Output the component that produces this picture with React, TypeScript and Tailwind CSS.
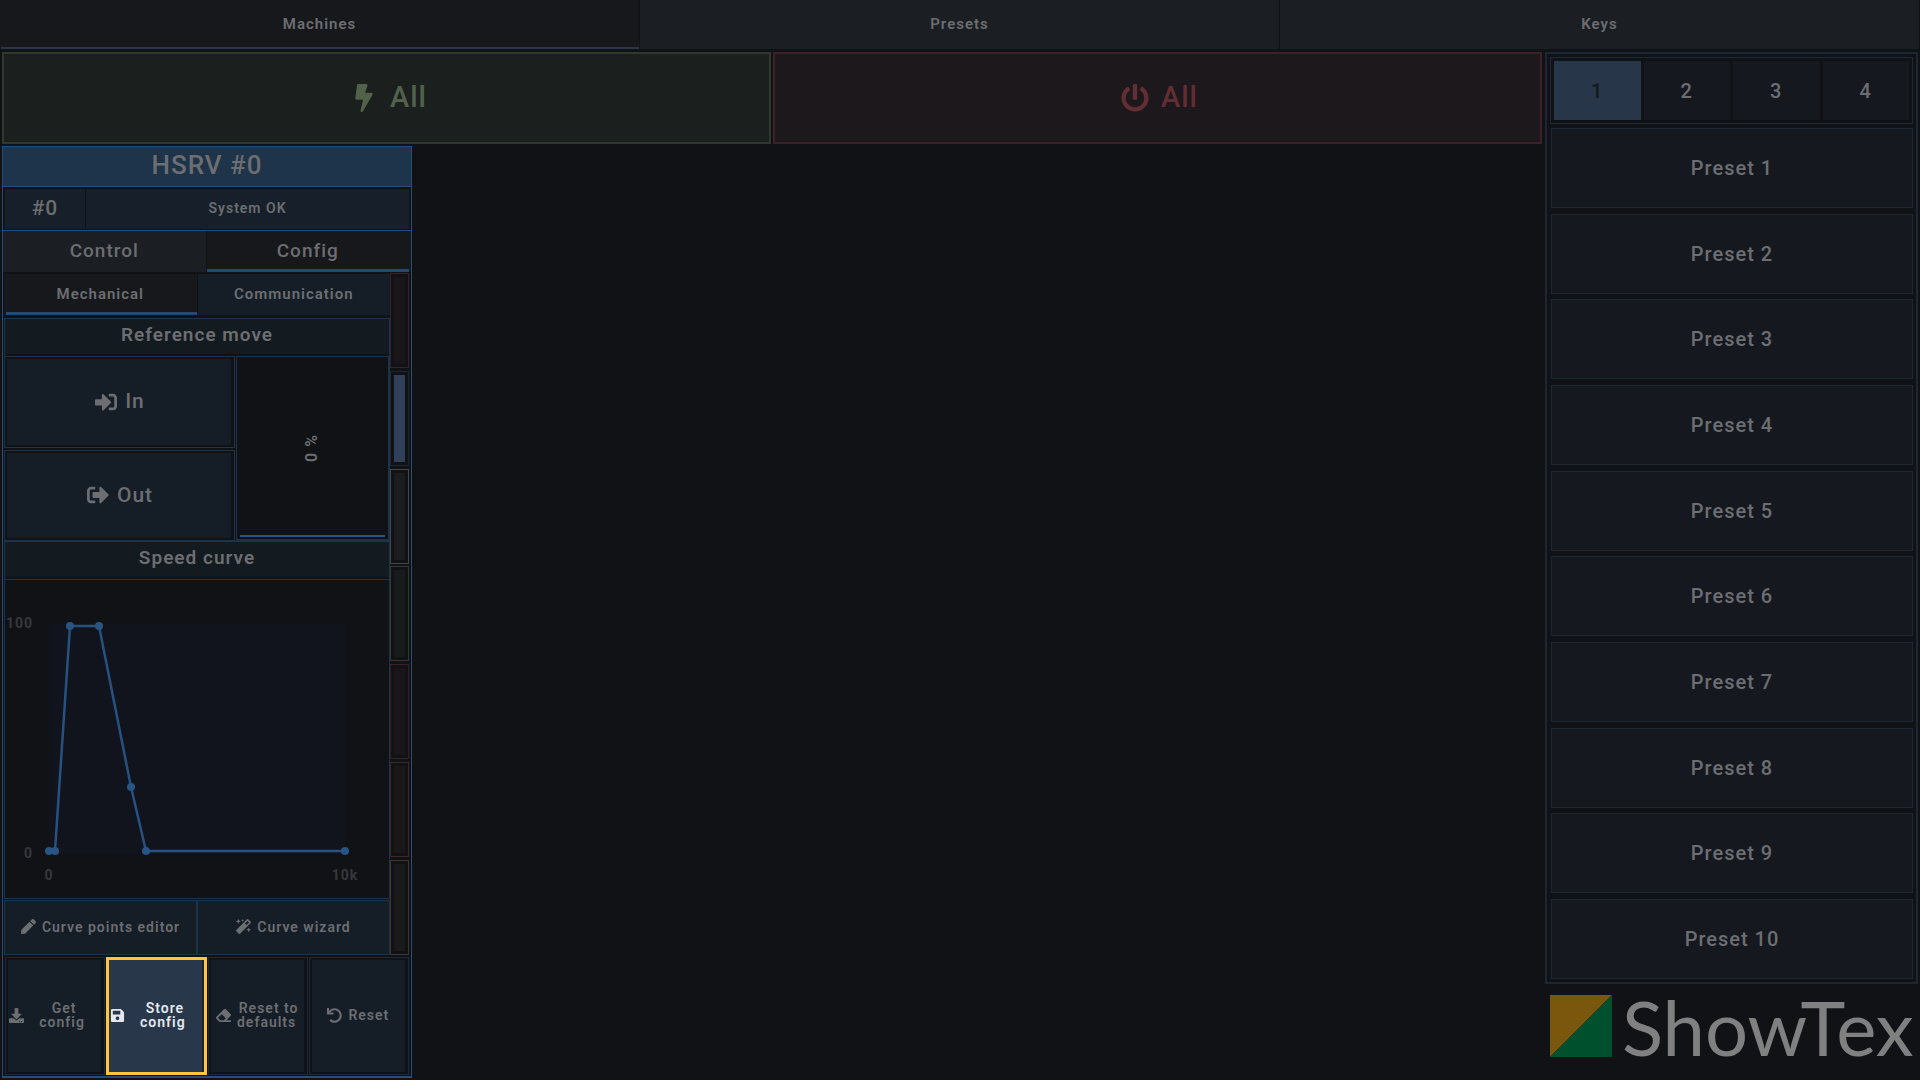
import type { ReactNode } from 'react'
import clsx from 'clsx'
import { FaBolt, FaDownload, FaEraser, FaMagic, FaPen, FaPowerOff, FaSave, FaSignInAlt, FaSignOutAlt, FaUndo } from 'react-icons/fa'

const NAV_TABS = ['Machines', 'Presets', 'Keys']
const PRESET_PAGES = [1, 2, 3, 4]
const PRESETS = Array.from({ length: 10 }, (_, i) => `Preset ${i + 1}`)

const GROUPS = [
  { name: 'Red', border: 'border-[#3a2026]', fill: 'bg-[#191518]' },
  { name: 'Blue', border: 'border-[#1c2631]', fill: 'bg-[#30405a]' },
  { name: 'White', border: 'border-[#45464a]', fill: 'bg-[#1b1c1f]' },
  { name: 'Green', border: 'border-[#323a2d]', fill: 'bg-[#171b1c]' },
  { name: 'Crimson', border: 'border-[#3c1d27]', fill: 'bg-[#19151a]' },
  { name: 'Orange', border: 'border-[#402728]', fill: 'bg-[#1a1719]' },
  { name: 'Amber', border: 'border-[#42362a]', fill: 'bg-[#1a1a1a]' },
]

// curve points in plot pixels
const CURVE = [
  [44, 271],
  [50, 271],
  [65, 46],
  [94, 46],
  [126, 207],
  [141, 271],
  [340, 271],
]

function Tab({ active, className, line, children }: { active?: boolean; className?: string; line?: string; children: ReactNode }) {
  return (
    <button role="tab" aria-selected={!!active} className={clsx('flex flex-1 flex-col tracking-[1px]', className)}>
      <span className="flex w-full flex-1 items-center justify-center">{children}</span>
      {active && <span className={clsx('self-stretch', line)} />}
    </button>
  )
}

function SectionTitle({ children }: { children: ReactNode }) {
  return (
    <div className="border border-b-0 border-[#1d3349] pb-0.5">
      <h3 className="flex h-[35px] items-center justify-center bg-[#131a20] pb-0.5 text-[19px] font-semibold tracking-[1px]">{children}</h3>
    </div>
  )
}

function MoveButton({ icon, children }: { icon: ReactNode; children: ReactNode }) {
  return (
    <button className="flex flex-1 border border-[#1d3349] p-0.5 pr-[3px]">
      <span className="flex h-full w-full items-center justify-center gap-2 bg-[#151d26] pl-0.5 text-[21px] font-medium tracking-[1px]">
        {icon}
        {children}
      </span>
    </button>
  )
}

function ActionButton({ icon, highlighted, children }: { icon: ReactNode; highlighted?: boolean; children: ReactNode }) {
  return (
    <button className={clsx('flex flex-1 text-sm leading-[14px] font-semibold tracking-[1px]', highlighted ? 'border-3 border-[#ffc53d] text-[#e4e8ee]' : 'border border-[#1a2a3b] p-0.5 pr-[3px]')}>
      <span className={clsx('flex h-full w-full items-center justify-center gap-1 pb-0.5', highlighted ? 'border-r-2 border-[#1a2635] bg-[#28384a]' : 'bg-[#151d26]')}>
        {icon}
        {children}
      </span>
    </button>
  )
}

function SpeedCurve() {
  return (
    <div className="flex-1 border border-[#1d3349]">
      <svg viewBox="0 0 384 318" className="w-full" role="img" aria-label="Speed curve">
        <rect x="44" y="44" width="296" height="230" fill="#11141c" />
        <polyline points={CURVE.map((p) => p.join(',')).join(' ')} fill="none" stroke="#265180" strokeWidth="2.5" />
        {CURVE.map(([x, y]) => (
          <circle key={x} cx={x} cy={y} r="4" fill="#285584" />
        ))}
        <g fill="#37383b" fontSize="14" fontWeight="700" letterSpacing="1">
          <text x="28" y="48" textAnchor="end">
            100
          </text>
          <text x="28" y="278" textAnchor="end">
            0
          </text>
          <text x="44" y="300" textAnchor="middle">
            0
          </text>
          <text x="340" y="300" textAnchor="middle">
            10k
          </text>
        </g>
      </svg>
    </div>
  )
}

function MachinePanel() {
  return (
    <section className="flex w-[410px] flex-1 flex-col border border-b-2 border-[#264d78]">
      <h2 className="flex h-10 items-center justify-center border-b border-[#264d78] bg-[#1e344a] pb-0.5 text-[26px] font-medium tracking-[1px]">HSRV #0</h2>
      <div className="flex gap-px border-b border-[#264d78] px-0.5 pt-0.5 pb-px tracking-[1px]">
        <div className="flex h-10 w-20 items-center justify-center bg-[#17202a] text-[21px] font-medium">#0</div>
        <div className="flex flex-1 items-center justify-center bg-[#17202a] pb-0.5 text-sm font-semibold">System OK</div>
      </div>
      <div role="tablist" className="flex h-[41px] gap-px text-[19px] font-medium">
        <Tab className="bg-[#1b1e22]">Control</Tab>
        <Tab active className="bg-[#17181c] pr-0.5" line="-mt-[3px] h-[3px] bg-[#244a71]">
          Config
        </Tab>
      </div>
      <div className="flex flex-1 pt-0.5 pr-0.5 pl-px">
        <div className="flex flex-1 flex-col">
          <div role="tablist" className="mb-[3px] flex h-[41px] gap-px text-[15px] font-semibold">
            <Tab active className="bg-[#17181c]" line="-mt-[3px] ml-0.5 h-[3px] bg-[#244a71]">
              Mechanical
            </Tab>
            <Tab className="bg-[#151e27]">Communication</Tab>
          </div>
          <SectionTitle>Reference move</SectionTitle>
          <div className="flex h-[185px] gap-px">
            <div className="flex w-[231px] flex-col gap-0.5">
              <MoveButton icon={<FaSignInAlt size={22} />}>In</MoveButton>
              <MoveButton icon={<FaSignOutAlt size={22} />}>Out</MoveButton>
            </div>
            <button className="flex flex-1 flex-col border border-r-2 border-b-2 border-[#1d3349] px-[3px] pb-0.5 text-base font-semibold tracking-[1px]">
              <span className="flex w-full flex-1 items-center justify-center border-b-2 border-[#285584] pt-1 pr-0.5">
                <span className="rotate-180 [writing-mode:vertical-rl]">0 %</span>
              </span>
            </button>
          </div>
          <SectionTitle>Speed curve</SectionTitle>
          <SpeedCurve />
          <div className="mt-px flex h-[55px] text-sm font-semibold">
            <button className="flex flex-1 items-center justify-center gap-1.5 border border-[#1d3349] bg-[#151d26] pb-0.5 tracking-[1px]">
              <FaPen size={15} />
              Curve points editor
            </button>
            <button className="flex flex-1 items-center justify-center gap-1.5 border border-[#1d3349] bg-[#151d26] pb-0.5 tracking-[1px]">
              <FaMagic size={15} />
              Curve wizard
            </button>
          </div>
        </div>
        <div className="-mt-px flex w-[19px] flex-col justify-between">
          {GROUPS.map((group) => (
            <button key={group.name} aria-label={group.name} className={clsx('flex h-[95px] border p-[3px]', group.border)}>
              <span className={clsx('h-full w-full', group.fill)} />
            </button>
          ))}
        </div>
      </div>
      <div className="mt-0.5 mb-px grid h-[118px] grid-cols-4 gap-px px-0.5">
        <ActionButton icon={<FaDownload size={15} className="shrink-0" />}>
          <span className="w-[72px] pr-1">
            <span className="pl-1">Get</span>
            <br />
            config
          </span>
        </ActionButton>
        <ActionButton highlighted icon={<FaSave size={15} className="shrink-0" />}>
          <span className="w-[72px] pr-1">
            <span className="pl-1">Store</span>
            <br />
            config
          </span>
        </ActionButton>
        <ActionButton icon={<FaEraser size={15} className="shrink-0" />}>
          <span>
            <span className="pl-1">Reset to</span>
            <br />
            defaults
          </span>
        </ActionButton>
        <ActionButton icon={<FaUndo size={15} className="shrink-0" />}>
          <span className="pl-0.5">Reset</span>
        </ActionButton>
      </div>
    </section>
  )
}

function Logo() {
  return (
    <div className="flex h-24 items-start gap-2.5 pt-[11px] pl-[5px]">
      <svg viewBox="0 0 62 62" className="size-[62px] shrink-0" aria-hidden="true">
        <path d="M0 0H62L0 62Z" fill="#7b560d" />
        <path d="M62 0V62H0Z" fill="#00502d" />
      </svg>
      <span className="font-[Lato,sans-serif] text-[76px] leading-16 text-[#808080]">ShowTex</span>
    </div>
  )
}

export default function App() {
  return (
    <div className="flex h-screen flex-col overflow-hidden bg-[#101215] font-[Roboto,sans-serif] text-[#6c6e72]">
      <nav role="tablist" className="flex h-[49px] gap-px pr-px text-[15px] font-semibold">
        {NAV_TABS.map((tab, i) => (
          <Tab key={tab} active={i === 0} className={i === 0 ? 'bg-[#17181c]' : 'bg-[#1b1e22]'} line="-mt-0.5 ml-px h-0.5 bg-[#2a374a]">
            {tab}
          </Tab>
        ))}
      </nav>
      <div className="flex flex-1 gap-[3px] px-0.5 pt-[3px]">
        <main className="flex flex-1 flex-col gap-0.5 pb-0.5">
          <div className="flex h-[92px] gap-0.5 text-[29px] font-medium tracking-[1px]">
            <button className="flex flex-1 items-center justify-center gap-3 border-2 border-[#30382d] bg-[#1b1f1e] pl-1 text-[#52614a]">
              <FaBolt size={28} />
              All
            </button>
            <button className="flex flex-1 items-center justify-center gap-3 border-2 border-[#3c2127] bg-[#1d181c] pl-1 text-[#612e33]">
              <FaPowerOff size={28} />
              All
            </button>
          </div>
          <MachinePanel />
        </main>
        <aside className="flex w-[373px] flex-col">
          <div className="flex flex-1 flex-col gap-1 border-2 border-[#1c2735] p-[3px] text-xl font-medium">
            <div className="flex h-[67px] gap-[3px] border border-[#1c2833] p-[3px]">
              {PRESET_PAGES.map((page) => (
                <button key={page} className={clsx('flex-1 tracking-[1px]', page === 1 ? 'bg-[#283649] text-[#16191c]' : 'bg-[#15181f]')}>
                  {page}
                </button>
              ))}
            </div>
            <div className="flex flex-1 flex-col justify-between pl-px">
              {PRESETS.map((preset) => (
                <button key={preset} className="h-20 border border-[#1c2833] bg-[#15181f] tracking-[1px]">
                  {preset}
                </button>
              ))}
            </div>
          </div>
          <Logo />
        </aside>
      </div>
    </div>
  )
}
